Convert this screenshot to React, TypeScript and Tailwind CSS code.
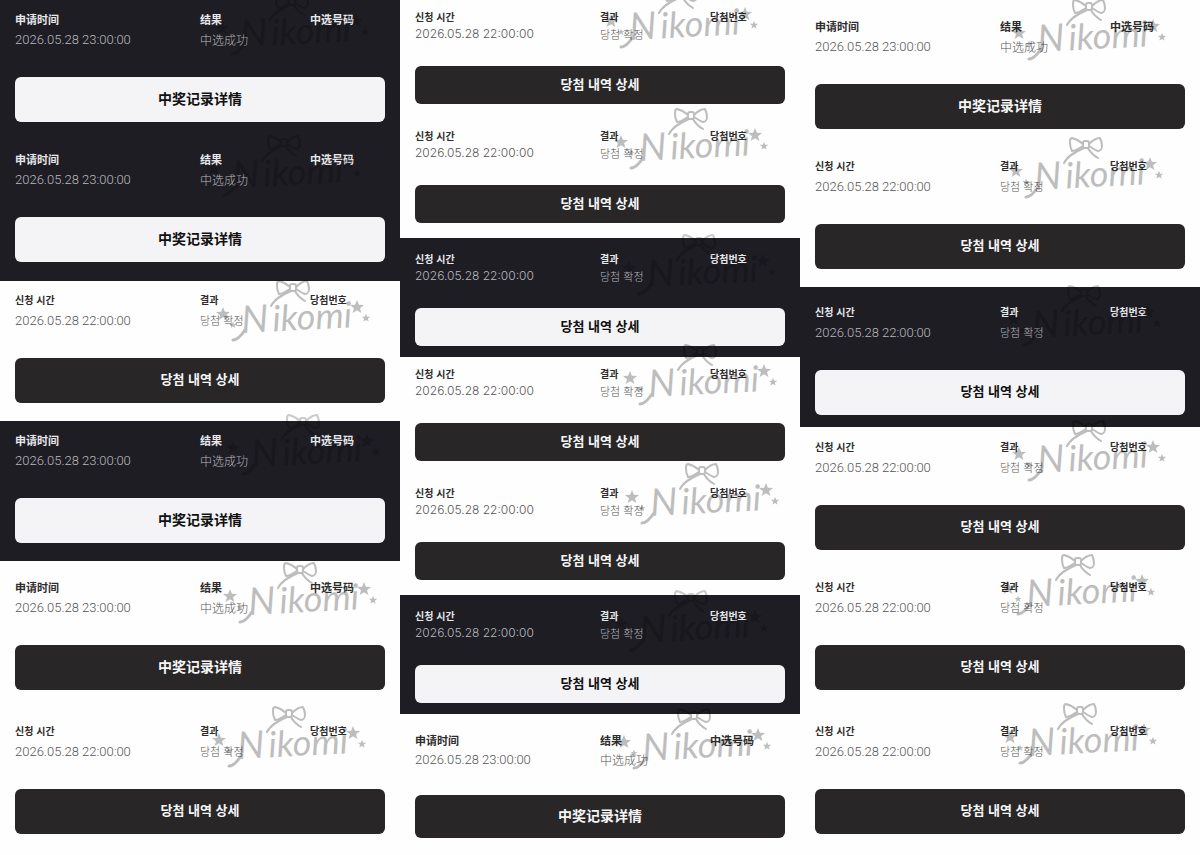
import React from 'react';

type Lang = 'zh' | 'ko';
type Density = 'regular' | 'medium' | 'compact';

interface EntryRecord {
  lang: Lang;
  dark?: boolean;
  density?: Density;
  spacing: string;
  // signature stamp position inside the row, in px of a 400px wide column
  stamp: [number, number];
}

const COPY = {
  zh: {
    time: '申请时间',
    result: '结果',
    number: '中选号码',
    date: '2026.05.28 23:00:00',
    status: '中选成功',
    action: '中奖记录详情',
    font: "font-['Noto_Sans_CJK_SC',sans-serif]",
    label: 'text-[11px]',
    value: 'text-xs',
    button: 'text-sm',
  },
  ko: {
    time: '신청 시간',
    result: '결과',
    number: '당첨번호',
    date: '2026.05.28 22:00:00',
    status: '당첨 확정',
    action: '당첨 내역 상세',
    font: "font-['Noto_Sans_CJK_KR',sans-serif]",
    label: 'text-[10px]',
    value: 'text-[11px]',
    button: 'text-[13px]',
  },
};

const DENSITY = {
  regular: {
    label: 'leading-5',
    value: 'leading-[21px]',
    date: "font-['Roboto',sans-serif] text-[13px] font-light",
    button: 'mt-[27px] h-[45px] pb-[3px]',
  },
  medium: {
    label: 'leading-5',
    value: 'leading-5',
    date: "font-['Roboto',sans-serif] text-[13px] font-light",
    button: 'mt-[25px] h-[43px] pb-[3px]',
  },
  compact: {
    label: 'leading-4',
    value: 'leading-[18px]',
    date: "font-['Inter',sans-serif] text-xs font-light",
    button: 'mt-[23px] h-[38px] pb-[3px]',
  },
};

const COLUMNS: EntryRecord[][] = [
  [
    { lang: 'zh', dark: true, spacing: 'pt-[9px] pb-[18px]', stamp: [217, -7] },
    { lang: 'zh', dark: true, spacing: 'pt-[9px] pb-[19px]', stamp: [209, -6] },
    { lang: 'ko', spacing: 'pt-[9px] pb-[18px]', stamp: [218, -2] },
    { lang: 'zh', dark: true, spacing: 'pt-[9px] pb-[18px]', stamp: [228, -8] },
    { lang: 'zh', spacing: 'pt-4 pb-[18px]', stamp: [225, 0] },
    { lang: 'ko', spacing: 'pt-[13px] pb-5', stamp: [214, -3] },
  ],
  [
    { lang: 'ko', density: 'compact', spacing: 'pt-[9px] pb-[15px]', stamp: [206, -14] },
    { lang: 'ko', density: 'compact', spacing: 'pt-[9px] pb-[15px]', stamp: [216, -12] },
    { lang: 'ko', density: 'compact', dark: true, spacing: 'pt-[13px] pb-[11px]', stamp: [224, -5] },
    { lang: 'ko', density: 'compact', spacing: 'pt-[9px] pb-[15px]', stamp: [225, -14] },
    { lang: 'ko', density: 'compact', spacing: 'pt-[9px] pb-[15px]', stamp: [227, -14] },
    { lang: 'ko', density: 'compact', dark: true, spacing: 'pt-[13px] pb-[11px]', stamp: [216, -6] },
    { lang: 'zh', density: 'medium', spacing: 'pt-4 pb-4', stamp: [219, -7] },
  ],
  [
    { lang: 'zh', spacing: 'pt-4 pb-[17px]', stamp: [214, -2] },
    { lang: 'ko', spacing: 'pt-[10px] pb-[18px]', stamp: [211, -10] },
    { lang: 'ko', dark: true, spacing: 'pt-[15px] pb-3', stamp: [209, -3] },
    { lang: 'ko', spacing: 'pt-[10px] pb-[18px]', stamp: [214, -8] },
    { lang: 'ko', spacing: 'pt-[9px] pb-[18px]', stamp: [203, -15] },
    { lang: 'ko', spacing: 'pt-[13px] pb-5', stamp: [205, -6] },
  ],
];

const STAR = 'M0 -7 L1.9 -2.2 L7 -2 L3 1.2 L4.4 6 L0 3.2 L-4.4 6 L-3 1.2 L-7 -2 L-1.9 -2.2 Z';

const Signature = ({ position, dark }: { position: [number, number]; dark?: boolean }) => (
  <svg
    viewBox="0 0 160 68"
    className={`pointer-events-none absolute z-10 h-[68px] w-40 overflow-visible ${dark ? 'opacity-20' : 'opacity-25'}`}
    style={{ left: `${position[0] / 4}%`, top: position[1] }}
    aria-hidden="true"
  >
    <g fill="none" stroke="#000" strokeWidth="2" strokeLinecap="round" strokeLinejoin="round">
      {/* Bow */}
      <path d="M72 8 C69 5 65 3 61 2 C59 2 59 4 59 7 C59 10 60 13 61 15 C65 15 69 12 72 10" />
      <path d="M78 8 C81 5 85 2 89 2 C90 4 91 7 91 10 C91 13 89 15 87 15 C84 14 81 12 78 10" />
      <rect x="72" y="5" width="6" height="7" rx="2" />
      {/* Ribbon tails and swash */}
      <path d="M73 12 C66 15 57 19 53 27" />
      <path d="M77 12 C79 16 82 19 87 22" />
      <path d="M15 61 C19 61 23 57 27 51" strokeWidth="3" />
    </g>
    <g fontFamily="Lato, sans-serif" fontStyle="italic" fill="#000" transform="rotate(-3 24 55)">
      <text x="24" y="54" fontSize="38">N</text>
      <text x="55" y="54" fontSize="36">ikomi</text>
    </g>
    {/* Stars */}
    <path d={STAR} transform="translate(5 35)" />
    <path d={STAR} transform="translate(15 46) scale(0.5)" />
    <path d={STAR} transform="translate(139 28)" />
    <path d={STAR} transform="translate(148 39) scale(0.6)" />
  </svg>
);

const RecordRow = ({ record }: { record: EntryRecord }) => {
  const copy = COPY[record.lang];
  const size = DENSITY[record.density ?? 'regular'];
  const labelClass = `font-bold ${copy.label} ${size.label} ${record.dark ? 'text-[#e8e8ea]' : 'text-[#2c2c2c]'}`;
  const valueClass = `${size.value} ${record.dark ? 'text-[#b8b8bc]' : 'text-[#555]'}`;

  return (
    <article
      lang={record.lang}
      className={`relative px-[15px] ${copy.font} ${record.spacing} ${record.dark ? 'bg-[#1e1d24]' : ''}`}
    >
      <dl className="grid grid-cols-[185fr_110fr_75fr] whitespace-nowrap">
        <div>
          <dt className={labelClass}>{copy.time}</dt>
          <dd className={`${valueClass} ${size.date}`}>{copy.date}</dd>
        </div>
        <div>
          <dt className={labelClass}>{copy.result}</dt>
          <dd className={`font-light ${copy.value} ${valueClass}`}>{copy.status}</dd>
        </div>
        <div>
          <dt className={labelClass}>{copy.number}</dt>
        </div>
      </dl>
      <button
        type="button"
        className={`block w-full rounded-md font-bold ${copy.button} ${size.button} ${
          record.dark ? 'bg-[#f4f4f6] text-[#111]' : 'bg-[#282627] text-[#f6f6f6]'
        }`}
      >
        {copy.action}
      </button>
      <Signature position={record.stamp} dark={record.dark} />
    </article>
  );
};

export default function App() {
  return (
    <main className="grid min-h-screen grid-cols-3 items-start overflow-hidden bg-[#fefefe]">
      {COLUMNS.map((records, col) => (
        <section key={col}>
          {records.map((record, i) => (
            <RecordRow key={i} record={record} />
          ))}
        </section>
      ))}
    </main>
  );
}
